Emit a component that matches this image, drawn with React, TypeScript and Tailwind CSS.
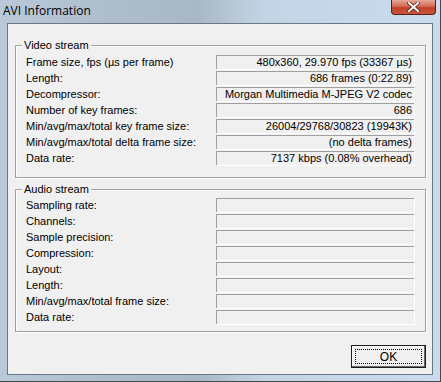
import React from "react";

const videoRows: [string, string][] = [
  ["Frame size, fps (µs per frame)", "480x360, 29.970 fps (33367 µs)"],
  ["Length:", "686 frames (0:22.89)"],
  ["Decompressor:", "Morgan Multimedia M-JPEG V2 codec"],
  ["Number of key frames:", "686"],
  ["Min/avg/max/total key frame size:", "26004/29768/30823 (19943K)"],
  ["Min/avg/max/total delta frame size:", "(no delta frames)"],
  ["Data rate:", "7137 kbps (0.08% overhead)"],
];

const audioRows: [string, string][] = [
  ["Sampling rate:", ""],
  ["Channels:", ""],
  ["Sample precision:", ""],
  ["Compression:", ""],
  ["Layout:", ""],
  ["Length:", ""],
  ["Min/avg/max/total frame size:", ""],
  ["Data rate:", ""],
];

function Group({ title, rows, className }: { title: string; rows: [string, string][]; className: string }) {
  return (
    <div className={"relative border border-[#a0a0a0] shadow-[inset_1px_1px_0_#fff,1px_1px_0_#fff] pl-[10px] pr-[11px] " + className}>
      <span className="absolute left-[6px] top-[-8px] bg-[#f0f0f0] px-[2px] leading-[14px]">{title}</span>
      <div className="flex flex-col gap-[2px]">
        {rows.map(([label, value], i) => (
          <div key={i} className="flex items-center h-[14px]">
            <span className="w-[190px] leading-[14px] whitespace-nowrap">{label}</span>
            <div className="w-[199px] h-[14px] border-t border-l border-[#a0a0a0] shadow-[1px_1px_0_#fff] text-right pr-[2px] leading-[13px] whitespace-nowrap">
              {value}
            </div>
          </div>
        ))}
      </div>
    </div>
  );
}

export default function App() {
  return (
    <div
      className="w-[441px] h-[382px] flex flex-col border-r border-b border-[#404850] bg-[linear-gradient(90deg,#b9c9d9_0%,#aebdcc_25%,#a9b8c6_45%,#c3d4e5_60%,#c9dbec_100%)] text-[11px] text-black"
      style={{ fontFamily: '"Liberation Sans", Arial, sans-serif' }}
    >
      <div className="h-[23px] flex items-start justify-between shrink-0">
        <span
          className="pl-[3px] pt-[3px] text-[12px] leading-[16px]"
          style={{ fontFamily: '"Open Sans", "Noto Sans", sans-serif' }}
        >
          AVI Information
        </span>
        <div className="mr-[4px] w-[45px] h-[15px] rounded-b-[4px] border border-t-0 border-[#5a1e14] bg-[linear-gradient(180deg,#e8a89a_0%,#d46a52_45%,#c0402a_55%,#c8553e_100%)] flex items-center justify-center">
          <svg width="13" height="10" viewBox="0 0 13 10">
            <path d="M2 1 L11 9 M11 1 L2 9" stroke="#5a2a20" strokeWidth="3.6" strokeLinecap="square" />
            <path d="M2 1 L11 9 M11 1 L2 9" stroke="#fff" strokeWidth="2" strokeLinecap="square" />
          </svg>
        </div>
      </div>
      <div className="mx-[7px] mb-[6px] flex-1 border border-[#6a7784] bg-[#f0f0f0] pl-[7px] pr-[6px] pt-[21px] flex flex-col">
        <Group title="Video stream" rows={videoRows} className="pt-[9px] pb-[12px]" />
        <Group title="Audio stream" rows={audioRows} className="mt-[11px] pt-[8px] pb-[7px]" />
        <div className="flex justify-end mt-[13px]">
          <button className="w-[75px] h-[23px] border border-[#1e1e1e] bg-[#f0f0f0] shadow-[inset_-1px_-1px_0_#696969,inset_1px_1px_0_#fff] p-[3px]">
            <div className="w-full h-full border border-dotted border-black flex items-center justify-center text-[12px] leading-none">
              OK
            </div>
          </button>
        </div>
      </div>
    </div>
  );
}
